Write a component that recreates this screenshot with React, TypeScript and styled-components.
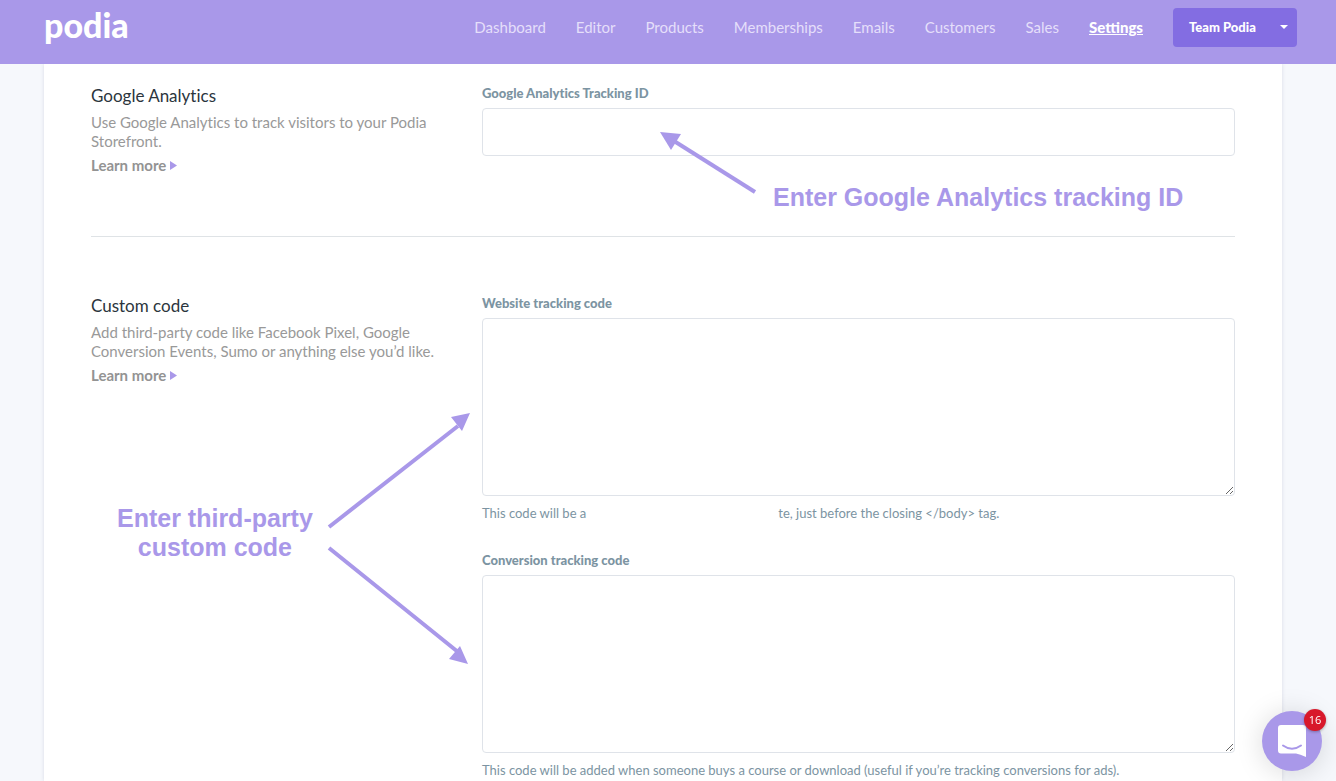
import React from "react";
import styled, { createGlobalStyle } from "styled-components";

const lilac = "#a998e9";
const slate = "#7c94a2";

const GlobalStyle = createGlobalStyle`
  *, *::before, *::after { box-sizing: border-box; }
  body {
    margin: 0;
    background: #f6f8fc;
    font-family: Lato, "Open Sans", sans-serif;
  }
`;

const Header = styled.header`
  position: sticky;
  top: 0;
  z-index: 2;
  height: 64px;
  padding: 0 39px 0 44px;
  display: flex;
  align-items: flex-start;
  background: ${lilac};
`;

const Logo = styled.a`
  margin-right: auto;
  padding-top: 5px;
  color: #fff;
  font-size: 34px;
  font-weight: 900;
  line-height: 40px;
  text-decoration: none;
`;

const Nav = styled.nav`
  display: flex;
  gap: 30px;
  padding: 17px 30px 0 0;
`;

const NavLink = styled.a<{ $active?: boolean }>`
  font-size: 15px;
  line-height: 20px;
  color: ${(p) => (p.$active ? "#fff" : "#e5dffa")};
  font-weight: ${(p) => (p.$active ? 900 : 400)};
  text-decoration: ${(p) => (p.$active ? "underline" : "none")};
`;

const TeamButton = styled.button`
  width: 124px;
  height: 39px;
  margin-top: 8px;
  padding: 0 9px 2px 16px;
  display: flex;
  align-items: center;
  justify-content: space-between;
  border: 0;
  border-radius: 4px;
  background: #836de2;
  color: #fff;
  font-family: inherit;
  font-size: 13px;
  font-weight: 900;
`;

const Card = styled.main`
  margin: 0 54px 0 44px;
  min-height: calc(100vh - 64px);
  padding: 20px 47px 0;
  background: #fff;
  box-shadow: 0 0 4px rgba(60, 70, 110, 0.16);
  font-variant-ligatures: none;
`;

const Section = styled.section`
  position: relative;
  display: grid;
  grid-template-columns: 351px minmax(0, 1fr);
  column-gap: 40px;

  & + & {
    margin-top: 57px;
  }
`;

const DividedSection = styled(Section)`
  padding-bottom: 61px;
  border-bottom: 1px solid #dfe3e6;
`;

const Title = styled.h2`
  margin: 0 0 5px;
  color: #2b353d;
  font-size: 17px;
  font-weight: 400;
  line-height: 24px;
`;

const Description = styled.p`
  margin: 0 0 5px;
  color: #999;
  font-size: 15px;
  line-height: 19px;
`;

const LearnMore = styled.a`
  display: flex;
  width: fit-content;
  align-items: center;
  gap: 4px;
  color: #939393;
  font-size: 15px;
  font-weight: 700;
  line-height: 19px;
  text-decoration: none;
`;

const Fields = styled.div`
  display: flex;
  flex-direction: column;
  gap: 29px;
`;

const Field = styled.div`
  display: flex;
  flex-direction: column;
`;

const Label = styled.label`
  margin-bottom: 6px;
  color: ${slate};
  font-size: 13px;
  font-weight: 900;
  line-height: 18px;
`;

const TextInput = styled.input`
  width: 100%;
  height: 48px;
  padding: 0 14px;
  border: 1px solid #dfe3e9;
  border-radius: 4px;
  background: #fff;
`;

const CodeArea = styled.textarea`
  display: block;
  width: 100%;
  height: 178px;
  padding: 14px;
  border: 1px solid #dfe3e9;
  border-radius: 4px;
  background: #fff;
  resize: vertical;
`;

const Help = styled.p`
  display: flex;
  gap: 192px;
  margin: 8px 0 0;
  color: ${slate};
  font-size: 13px;
  line-height: 18px;
`;

const Note = styled.strong<{ $left: number; $top: number }>`
  position: absolute;
  left: ${(p) => p.$left}px;
  top: ${(p) => p.$top}px;
  color: ${lilac};
  font-family: "Liberation Sans", Arial, sans-serif;
  font-size: 25px;
  line-height: 29px;
  text-align: center;
  white-space: nowrap;
`;

const Arrows = styled.svg<{ $left: number; $top: number }>`
  position: absolute;
  left: ${(p) => p.$left}px;
  top: ${(p) => p.$top}px;
  overflow: visible;
  pointer-events: none;
`;

const ChatButton = styled.button`
  position: fixed;
  right: 14px;
  bottom: 10px;
  z-index: 3;
  width: 60px;
  height: 60px;
  padding: 0;
  display: grid;
  place-items: center;
  border: 0;
  border-radius: 50%;
  background: ${lilac};
  box-shadow: 0 2px 28px rgba(0, 0, 0, 0.15);
`;

const Badge = styled.span`
  position: absolute;
  top: -2px;
  right: -4px;
  width: 22px;
  height: 22px;
  border-radius: 50%;
  background: #d8182b;
  box-shadow: 0 1px 3px rgba(0, 0, 0, 0.3);
  color: #fff;
  font-family: "Open Sans", sans-serif;
  font-size: 11px;
  line-height: 21px;
  text-align: center;
`;

const navItems = ["Dashboard", "Editor", "Products", "Memberships", "Emails", "Customers", "Sales", "Settings"];

function LearnMoreLink() {
  return (
    <LearnMore href="#">
      Learn more
      <svg width="7" height="9" viewBox="0 0 7 9" aria-hidden="true">
        <path d="M0 0L7 4.500L0 9Z" fill={lilac} />
      </svg>
    </LearnMore>
  );
}

export default function App() {
  return (
    <>
      <GlobalStyle />
      <Header>
        <Logo href="#">podia</Logo>
        <Nav aria-label="Main">
          {navItems.map((item) => (
            <NavLink key={item} href="#" $active={item === "Settings"}>
              {item}
            </NavLink>
          ))}
        </Nav>
        <TeamButton type="button">
          Team Podia
          <svg width="8" height="4" viewBox="0 0 8 4" aria-hidden="true">
            <path d="M0 0H8L4 4Z" fill="#fff" />
          </svg>
        </TeamButton>
      </Header>

      <Card>
        <DividedSection>
          <div>
            <Title>Google Analytics</Title>
            <Description>Use Google Analytics to track visitors to your Podia Storefront.</Description>
            <LearnMoreLink />
          </div>
          <Fields>
            <Field>
              <Label htmlFor="analytics-id">Google Analytics Tracking ID</Label>
              <TextInput id="analytics-id" type="text" />
            </Field>
          </Fields>
          <Arrows $left={569} $top={48} width="96" height="62" viewBox="0 0 96 62" aria-hidden="true">
            <path d="M14 9L95 60" stroke={lilac} strokeWidth="4" />
            <path d="M0 0L21 2L11 18Z" fill={lilac} />
          </Arrows>
          <Note $left={682} $top={99}>Enter Google Analytics tracking ID</Note>
        </DividedSection>

        <Section>
          <div>
            <Title>Custom code</Title>
            <Description>
              Add third-party code like Facebook Pixel, Google Conversion Events, Sumo or anything else you’d like.
            </Description>
            <LearnMoreLink />
          </div>
          <Fields>
            <Field>
              <Label htmlFor="website-code">Website tracking code</Label>
              <CodeArea id="website-code" />
              <Help>
                <span>This code will be a</span>
                <span>te, just before the closing &lt;/body&gt; tag.</span>
              </Help>
            </Field>
            <Field>
              <Label htmlFor="conversion-code">Conversion tracking code</Label>
              <CodeArea id="conversion-code" />
              <Help>
                This code will be added when someone buys a course or download (useful if you’re tracking conversions
                for ads).
              </Help>
            </Field>
          </Fields>
          <Note $left={26} $top={210}>
            Enter third-party
            <br />
            custom code
          </Note>
          <Arrows $left={237} $top={119} width="143" height="252" viewBox="0 0 143 252" aria-hidden="true">
            <path d="M1 114L130 13M1 135L130 239" stroke={lilac} strokeWidth="4" fill="none" />
            <path d="M142 0L123 4L134 18ZM140 251L132 233L121 246Z" fill={lilac} />
          </Arrows>
        </Section>
      </Card>

      <ChatButton type="button" aria-label="Open chat">
        <svg width="28" height="32" viewBox="0 0 28 32" fill="none" aria-hidden="true">
          <path d="M3 0H25Q28 0 28 3V32Q22 29 18 28.500H3Q0 28.500 0 25.500V3Q0 0 3 0Z" fill="#fff" />
          <path d="M5 20.500Q14 27 23 20.500" stroke={lilac} strokeWidth="2" strokeLinecap="round" />
        </svg>
        <Badge>16</Badge>
      </ChatButton>
    </>
  );
}
